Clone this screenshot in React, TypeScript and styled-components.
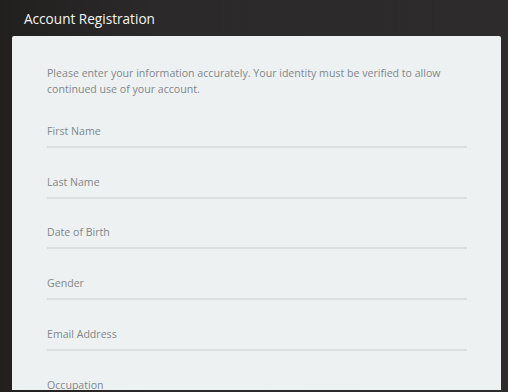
import styled, { createGlobalStyle } from "styled-components";

const GlobalStyle = createGlobalStyle`
  html, body {
    margin: 0;
    padding: 0;
    background: #2a2828;
  }
  body {
    font-family: "Open Sans", "Noto Sans", sans-serif;
  }
`;

const fields = [
  "First Name",
  "Last Name",
  "Date of Birth",
  "Gender",
  "Email Address",
  "Occupation",
];

export default function App() {
  return (
    <>
      <GlobalStyle />
      <Page>
        <Header>
          <Title>Account Registration</Title>
        </Header>
        <Card>
          <Intro>
            Please enter your information accurately. Your identity must be
            verified to allow continued use of your account.
          </Intro>
          <Form>
            {fields.map((f) => (
              <Field key={f}>
                <Label>{f}</Label>
              </Field>
            ))}
          </Form>
        </Card>
      </Page>
    </>
  );
}

const Page = styled.div`
  width: 508px;
  height: 392px;
  background: linear-gradient(90deg, #221f1f 0%, #2b2929 30%, #2d2b2b 100%);
  overflow: hidden;
  display: flex;
  flex-direction: column;
`;

const Header = styled.header`
  height: 36px;
  padding-left: 24px;
  display: flex;
  align-items: center;
  flex-shrink: 0;
`;

const Title = styled.h1`
  margin: 0;
  font-size: 13.6px;
  font-weight: 500;
  color: #f4f4f4;
  letter-spacing: 0;
`;

const Card = styled.section`
  margin-left: 12px;
  width: 489px;
  height: 354px;
  box-sizing: border-box;
  background: #eef1f2;
  border-radius: 2px 2px 0 0;
  padding: 29px 34px 0 35px;
  overflow: hidden;
`;

const Intro = styled.p`
  margin: 0;
  font-size: 10.6px;
  line-height: 16px;
  color: #80888c;
`;

const Form = styled.div`
  display: flex;
  flex-direction: column;
`;

const Field = styled.div`
  padding: 25.75px 0 6px;
  border-bottom: 2px solid #dadedf;
`;

const Label = styled.div`
  font-size: 10.6px;
  line-height: 17px;
  color: #80888c;
`;
